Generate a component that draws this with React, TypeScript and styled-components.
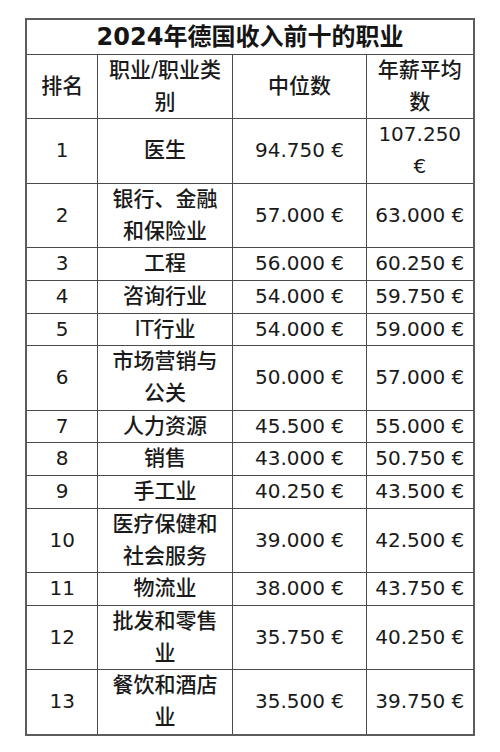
import React from 'react';
import styled, { createGlobalStyle } from 'styled-components';

const GlobalStyle = createGlobalStyle`
  html, body {
    margin: 0;
    padding: 0;
    background: #ffffff;
  }
  body {
    font-family: "DejaVu Sans", "Noto Sans CJK SC", sans-serif;
    color: #1c1c1c;
  }
`;

interface Job {
  rank: string;
  name: string[];
  median: string;
  average: string[];
}

const JOBS: Job[] = [
  { rank: '1', name: ['医生'], median: '94.750 €', average: ['107.250', '€'] },
  { rank: '2', name: ['银行、金融', '和保险业'], median: '57.000 €', average: ['63.000 €'] },
  { rank: '3', name: ['工程'], median: '56.000 €', average: ['60.250 €'] },
  { rank: '4', name: ['咨询行业'], median: '54.000 €', average: ['59.750 €'] },
  { rank: '5', name: ['IT行业'], median: '54.000 €', average: ['59.000 €'] },
  { rank: '6', name: ['市场营销与', '公关'], median: '50.000 €', average: ['57.000 €'] },
  { rank: '7', name: ['人力资源'], median: '45.500 €', average: ['55.000 €'] },
  { rank: '8', name: ['销售'], median: '43.000 €', average: ['50.750 €'] },
  { rank: '9', name: ['手工业'], median: '40.250 €', average: ['43.500 €'] },
  { rank: '10', name: ['医疗保健和', '社会服务'], median: '39.000 €', average: ['42.500 €'] },
  { rank: '11', name: ['物流业'], median: '38.000 €', average: ['43.750 €'] },
  { rank: '12', name: ['批发和零售', '业'], median: '35.750 €', average: ['40.250 €'] },
  { rank: '13', name: ['餐饮和酒店', '业'], median: '35.500 €', average: ['39.750 €'] },
];

// each entry is one visual line, so the wrapping matches the original
const Lines = ({ lines }: { lines: string[] }) => (
  <>
    {lines.map((l, i) => (
      <Line key={i}>{l}</Line>
    ))}
  </>
);

export default function App() {
  return (
    <>
      <GlobalStyle />
      <Table>
        <colgroup>
          <col style={{ width: 71 }} />
          <col style={{ width: 135 }} />
          <col style={{ width: 134 }} />
          <col style={{ width: 107 }} />
        </colgroup>
        <thead>
          <tr>
            <Title colSpan={4}>2024年德国收入前十的职业</Title>
          </tr>
          <tr>
            <Cell as="th">排名</Cell>
            <Cell as="th">
              <Lines lines={['职业/职业类', '别']} />
            </Cell>
            <Cell as="th">中位数</Cell>
            <Cell as="th">
              <Lines lines={['年薪平均', '数']} />
            </Cell>
          </tr>
        </thead>
        <tbody>
          {JOBS.map((job) => (
            <tr key={job.rank}>
              <Cell $num>{job.rank}</Cell>
              <Cell>
                <Lines lines={job.name} />
              </Cell>
              <Cell $num>{job.median}</Cell>
              <Cell $num>
                <Lines lines={job.average} />
              </Cell>
            </tr>
          ))}
        </tbody>
      </Table>
    </>
  );
}

const Table = styled.table`
  width: 447px;
  margin: 18px auto 0;
  border-collapse: collapse;
  table-layout: fixed;
  border: 2px solid #5c5c5c;
`;

const Title = styled.th`
  height: 34px;
  padding: 0;
  border: 1.5px solid #4a4a4a;
  font-size: 24px;
  font-weight: 700;
  letter-spacing: 0;
  color: #151515;
  text-align: center;
  vertical-align: middle;
  line-height: 34px;
`;

const Cell = styled.td<{ $num?: boolean }>`
  padding: 0;
  border: 1.5px solid #4a4a4a;
  font-size: ${({ $num }) => ($num ? '20px' : '21px')};
  font-weight: ${({ $num }) => ($num ? 400 : 500)};
  line-height: 31.7px;
  letter-spacing: 0;
  text-align: center;
  vertical-align: middle;
  color: #1a1a1a;
`;

const Line = styled.span`
  display: block;
  white-space: nowrap;
`;
